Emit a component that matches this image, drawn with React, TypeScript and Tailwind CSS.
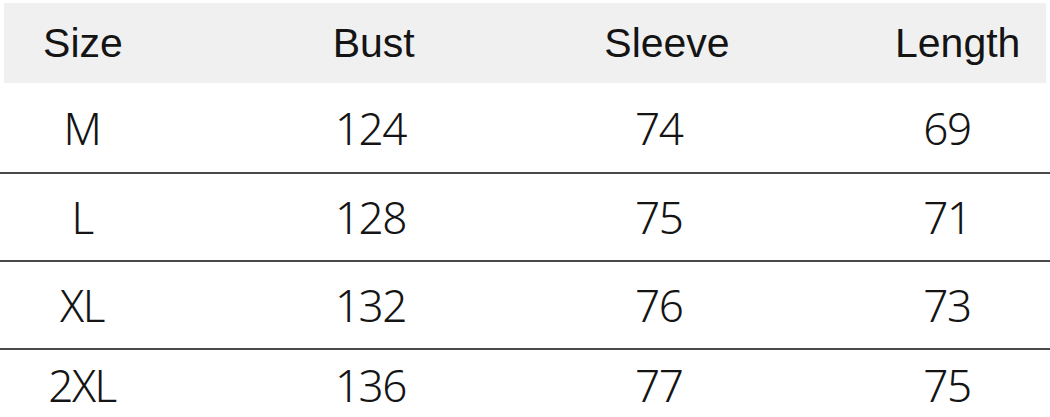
import React from "react";

const rows = [
  ["M", "124", "74", "69"],
  ["L", "128", "75", "71"],
  ["XL", "132", "76", "73"],
  ["2XL", "136", "77", "75"],
];

export default function App() {
  return (
    <div className="w-[1050px] h-[417px] overflow-hidden bg-white text-[#141414]">
      <div className="h-[3px]" />
      <div
        className="mx-[4px] h-[80px] bg-[#f0f0f0] flex items-center justify-between pl-[19px] pr-[31px] text-[41px] leading-none"
        style={{ fontFamily: '"Liberation Sans", Arial, sans-serif' }}
      >
        {["Size", "Bust", "Sleeve", "Length"].map((h) => (
          <div key={h} className="w-[120px] text-center">
            {h}
          </div>
        ))}
      </div>
      <div
        className="flex flex-col text-[44px] leading-[34px] font-light tracking-[-1.5px]"
        style={{ fontFamily: '"Noto Sans", "Open Sans", sans-serif' }}
      >
        {rows.map((r, i) => (
          <div
            key={i}
            className={`flex items-center justify-between pl-[22px] pr-[43px] ${
              i === 0
                ? "h-[89px]"
                : i === 3
                ? "h-[71px] border-t-2 border-[#4a4a4a]"
                : "h-[88px] border-t-2 border-[#4a4a4a]"
            }`}
          >
            {r.map((c, j) => (
              <div key={j} className="w-[120px] text-center">
                {c}
              </div>
            ))}
          </div>
        ))}
      </div>
    </div>
  );
}
